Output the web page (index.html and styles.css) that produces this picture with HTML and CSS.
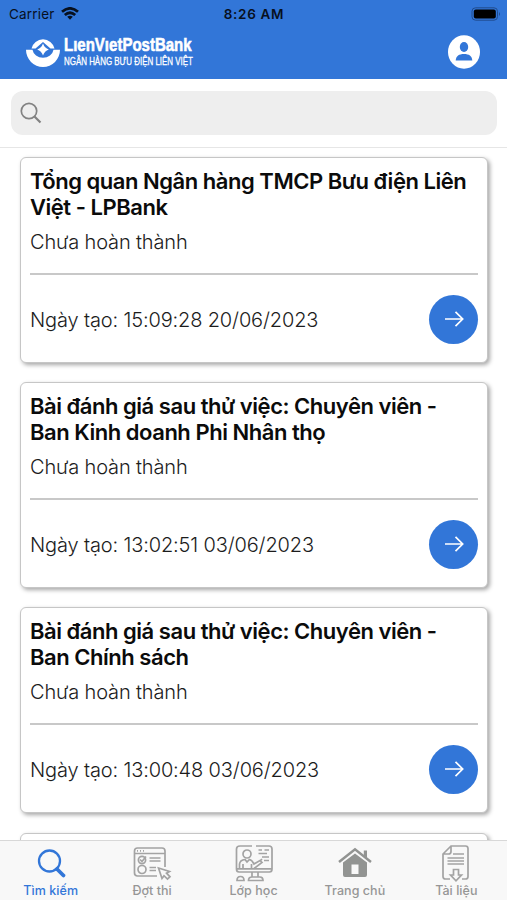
FILE: index.html
```
<!DOCTYPE html>
<html lang="vi">
<head>
  <meta charset="UTF-8" />
  <meta name="viewport" content="width=device-width, initial-scale=1" />
  <title>LienVietPostBank</title>
  <link rel="stylesheet" href="styles.css">
</head>
<body>

<header>
  <div class="status-bar">
    <div class="carrier">
      <span>Carrier</span>
      <svg width="18" height="13" viewBox="0 0 18 13" fill="none" stroke="#07101f" stroke-width="2.800">
        <path d="M1 4.8Q9 -2 17 4.8"/>
        <path d="M3.8 8Q9 3.6 14.2 8"/>
        <path d="M6.2 9.8Q9 7.6 11.8 9.8L9 12.8Z" fill="#07101f" stroke="none"/>
      </svg>
    </div>
    <span class="time">8:26 AM</span>
    <svg class="battery" width="30" height="14" viewBox="0 0 30 14">
      <rect x="1" y=".8" width="25.500" height="12.400" rx="3.500" fill="none" stroke="#204c8e"/>
      <rect x="2.800" y="2.500" width="22" height="9" rx="2" fill="#000"/>
      <path d="M28 5Q30 7 28 9Z" fill="#204c8e"/>
    </svg>
  </div>
  <div class="brand-bar">
    <div class="logo">
      <svg width="34" height="32" viewBox="0 0 34 32">
        <path d="M5.500 12.500A11.800 11.800 0 0 1 28.500 12.500H24.500L17 6L9.500 12.500Z" fill="#fff"/>
        <path d="M0 13.700H6.500A10.600 9.300 0 0 0 27.500 13.700H34A17 17.300 0 0 1 0 13.700Z" fill="#fff"/>
        <path d="M17 7.500Q18.500 12 22.800 13.500Q18.500 15 17 19.500Q15.500 15 11.200 13.500Q15.500 12 17 7.500Z" fill="#fff"/>
      </svg>
      <div class="logo-text">
        <span class="logo-name">LıenVıetPostBank</span>
        <span class="logo-sub">NGÂN HÀNG BƯU ĐIỆN LIÊN VIỆT</span>
      </div>
    </div>
    <svg class="avatar" width="32" height="34" viewBox="0 0 32 34">
      <ellipse cx="16" cy="17" rx="16" ry="16.700" fill="#fff"/>
      <ellipse cx="16" cy="12" rx="4.200" ry="5" fill="#3276d8"/>
      <path d="M7.700 25.500C8 21 11 19 16 19S24 21 24.300 25.500Z" fill="#3276d8"/>
    </svg>
  </div>
</header>

<div class="search">
  <div class="search-box">
    <svg width="22" height="22" viewBox="0 0 22 22" fill="none" stroke="#828282" stroke-width="1.700">
      <circle cx="9" cy="9" r="7.700"/>
      <path d="M14.500 14.500L20.500 20.500" stroke-width="2.200"/>
    </svg>
  </div>
</div>

<main>
  <article class="card">
    <h2>Tổng quan Ngân hàng TMCP Bưu điện Liên<br>Việt - LPBank</h2>
    <p class="state">Chưa hoàn thành</p>
    <div class="card-footer">
      <p>Ngày tạo: 15:09:28 20/06/2023</p>
      <a class="go" href="#"><svg width="20" height="18" viewBox="0 0 20 18"><path d="M1 9H18.500M11.500 1.800L18.700 9L11.500 16.200"/></svg></a>
    </div>
  </article>

  <article class="card">
    <h2>Bài đánh giá sau thử việc: Chuyên viên -<br>Ban Kinh doanh Phi Nhân thọ</h2>
    <p class="state">Chưa hoàn thành</p>
    <div class="card-footer">
      <p>Ngày tạo: 13:02:51 03/06/2023</p>
      <a class="go" href="#"><svg width="20" height="18" viewBox="0 0 20 18"><path d="M1 9H18.500M11.500 1.800L18.700 9L11.500 16.200"/></svg></a>
    </div>
  </article>

  <article class="card">
    <h2>Bài đánh giá sau thử việc: Chuyên viên -<br>Ban Chính sách</h2>
    <p class="state">Chưa hoàn thành</p>
    <div class="card-footer">
      <p>Ngày tạo: 13:00:48 03/06/2023</p>
      <a class="go" href="#"><svg width="20" height="18" viewBox="0 0 20 18"><path d="M1 9H18.500M11.500 1.800L18.700 9L11.500 16.200"/></svg></a>
    </div>
  </article>

  <article class="card"></article>
</main>

<nav>
  <a class="active" href="#">
    <svg width="40" height="40" viewBox="0 0 40 40">
      <circle cx="18.500" cy="18" r="10.500" stroke-width="2.300"/>
      <path d="M26 26L32.500 32.500" stroke-width="3.800" stroke-linecap="round"/>
    </svg>
    <span>Tìm kiếm</span>
  </a>
  <a href="#">
    <svg width="40" height="40" viewBox="0 0 40 40">
      <path d="M25 33H5.500Q2.500 33 2.500 30V8Q2.500 5 5.500 5H30Q33 5 33 8V24M2.500 10.500H33M5 7.800H6M8 7.800H9M11 7.800H12"/>
      <circle cx="10" cy="17" r="3.600"/>
      <circle cx="10" cy="26.500" r="4"/>
      <path d="M8 16.500L10 18.500L14 13.500M17.500 15H28.500M17.500 18H28.500M17.500 24.500H24M17.500 27.500H24"/>
      <path d="M26.500 25L37.500 28.500L34.500 30.200L38 33.800L35.500 36L32 32.700L30 35.500Z"/>
    </svg>
    <span>Đợt thi</span>
  </a>
  <a href="#">
    <svg width="40" height="40" viewBox="0 0 40 40">
      <path d="M18 3H6Q2.500 3 2.500 6V26Q2.500 29 5 29H35.500Q38 29 38 26V6Q38 3 35 3H22M2.500 25.800H38"/>
      <circle cx="13" cy="11" r="4"/>
      <path d="M5.500 25.500V21Q6 17 11 16.500L13 19L15.500 16.500Q18 17 20 21L26 17.500L28 19.500L20 25.500M9 21V25M17.500 21V25M26 18L28 16"/>
      <path d="M24.500 7H28M30.500 7H35M24.500 10.500H33M28 14H35M30 17.500H35"/>
      <path d="M18 29V34M24 29V34M14.500 37.500Q14.500 34 18 34H26Q29 34 29 37.500ZM3 37.500Q3 33.500 6.500 33.500T10 37.500Z"/>
    </svg>
    <span>Lớp học</span>
  </a>
  <a href="#">
    <svg width="40" height="40" viewBox="0 0 40 40">
      <path d="M4 19L20 6.300L36 19" stroke="#929492" stroke-width="2.500"/>
      <path d="M28.800 7.500H32V15L28.800 12.500Z" fill="#929492" stroke="none"/>
      <path d="M20 10.500L32 19.500V32Q32 34 30 34H10Q8 34 8 32V19.500ZM16.500 21.500V31H23.500V21.500Z" fill="#929492" fill-rule="evenodd" stroke="none"/>
    </svg>
    <span>Trang chủ</span>
  </a>
  <a href="#">
    <svg width="40" height="40" viewBox="0 0 40 40">
      <path d="M14 36H9.500Q7 36 7 33.500V11L15 3H29.500Q32 3 32 5.500V33.500Q32 36 29.500 36H26M7 11H12.500Q15 11 15 8.500V3"/>
      <path d="M17 11H28M11.500 15H28M11.500 18H28M11.500 21H28"/>
      <path d="M17.500 26.500H22.500V32H25.500L20 37.800L14.500 32H17.500Z" fill="#f8f8f8"/>
    </svg>
    <span>Tài liệu</span>
  </a>
</nav>

</body>
</html>
```
FILE: styles.css
```
:root {
  --primary: #3276d8;
  --line: #c6c6c6;
  --muted: #969696;
}

* { box-sizing: border-box; margin: 0; padding: 0; }

body {
  display: flex;
  flex-direction: column;
  height: 900px;
  overflow: hidden;
  font-family: Inter, "Liberation Sans", sans-serif;
  background: #fff;
  color: #0b0b0b;
}

a { text-decoration: none; }

svg { display: block; flex: none; }

header {
  flex: none;
  height: 79px;
  background: var(--primary);
  color: #07101f;
}

.status-bar {
  display: grid;
  grid-template-columns: 1fr auto 1fr;
  align-items: center;
  height: 27px;
  padding: 0 6px 0 9px;
  font-size: 13.5px;
}

.carrier {
  display: flex;
  align-items: center;
  gap: 6px;
  letter-spacing: .2px;
}

.time {
  margin-right: 2px;
  font-weight: 600;
  letter-spacing: .7px;
}

.battery { justify-self: end; }

.brand-bar {
  display: flex;
  align-items: center;
  justify-content: space-between;
  height: 50px;
  padding: 0 27px 0 26px;
}

.logo {
  display: flex;
  align-items: center;
  gap: 4px;
}

.logo-text {
  display: flex;
  flex-direction: column;
  width: 129px;
  color: #fff;
  font-family: "Liberation Sans", sans-serif;
  white-space: nowrap;
}

/* condensed lettering of the brand */
.logo-text span { transform-origin: 0 50%; }

.logo-name {
  font-size: 19px;
  line-height: 17px;
  font-weight: 700;
  -webkit-text-stroke: .6px #fff;
  transform: scaleX(.79);
}

.logo-sub {
  font-size: 11.5px;
  line-height: 16px;
  -webkit-text-stroke: .3px #fff;
  transform: scaleX(.69);
}

.search {
  flex: none;
  height: 69px;
  padding: 12px 10px 0 11px;
  border-bottom: 1px solid #e6e6e6;
}

.search-box {
  display: flex;
  align-items: center;
  height: 44px;
  padding-left: 9px;
  border-radius: 12px;
  background: #eee;
}

main {
  flex: 1;
  min-height: 0;
  overflow: hidden;
  padding: 9px 19px 0 20px;
}

.card {
  height: 206px;
  margin-bottom: 19.200px;
  padding: 10px 9px 0;
  border: 1px solid var(--line);
  border-radius: 6px;
  background: #fff;
  box-shadow: 2px 2px 4px rgba(0, 0, 0, .35);
}

.card h2 {
  font-size: 22px;
  line-height: 26px;
  font-weight: 600;
  letter-spacing: -.47px;
  white-space: nowrap;
}

.card p {
  font-size: 20px;
  line-height: 26px;
  font-weight: 300;
  letter-spacing: -.14px;
  color: #1c1c1c;
  white-space: nowrap;
}

.card .state { margin-top: 9px; }

.card-footer {
  display: flex;
  align-items: center;
  justify-content: space-between;
  height: 90px;
  margin-top: 18px;
  border-top: 2px solid #c8c8c8;
}

.card-footer p { padding-top: 1px; }

.go {
  display: flex;
  align-items: center;
  justify-content: center;
  width: 49px;
  height: 49px;
  border-radius: 50%;
  background: var(--primary);
}

.go path {
  fill: none;
  stroke: #fff;
  stroke-width: 1.700;
}

nav {
  flex: none;
  display: flex;
  height: 60px;
  border-top: 1px solid #d8d8d8;
  background: #f8f8f8;
}

nav a {
  flex: 1;
  display: flex;
  flex-direction: column;
  align-items: center;
  padding-top: 2px;
  color: var(--muted);
  font-size: 12.500px;
  font-weight: 500;
  line-height: 16px;
}

nav a svg {
  fill: none;
  stroke: #a3a3a3;
  stroke-width: 1.700;
}

nav a span { letter-spacing: .05px; }

nav .active { color: var(--primary); }

nav .active svg { stroke: var(--primary); }
```
